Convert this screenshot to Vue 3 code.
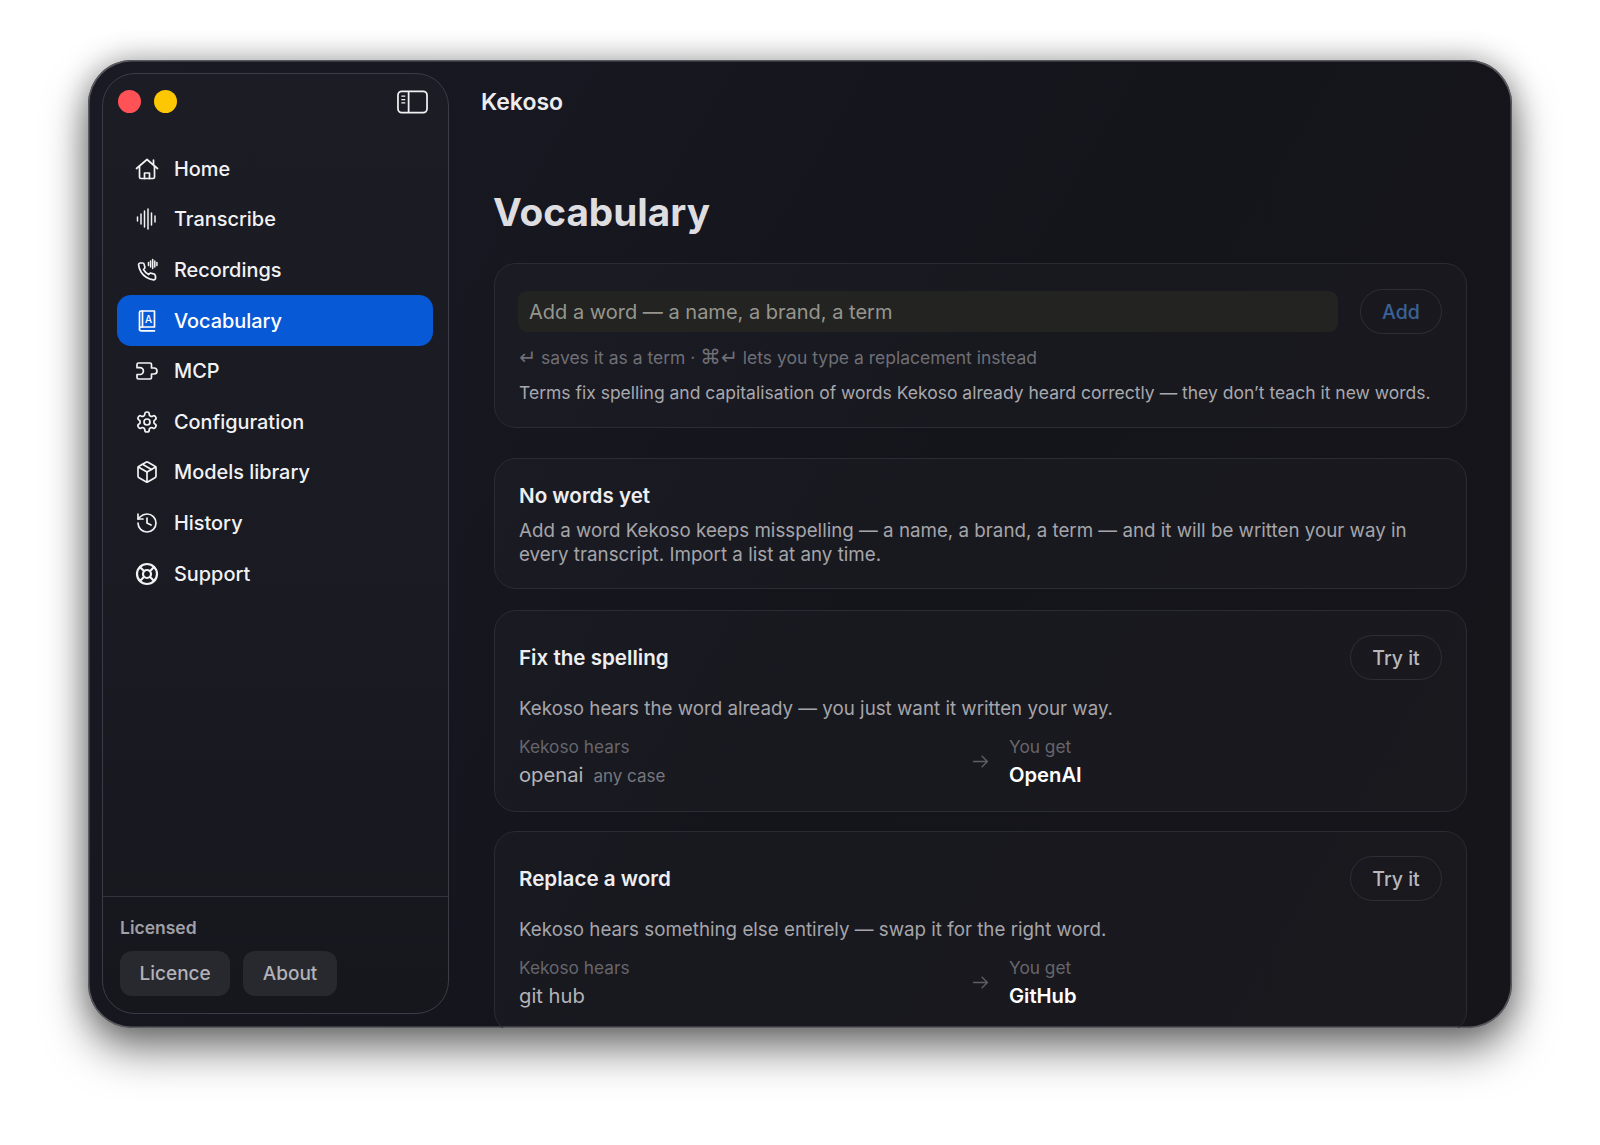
<script setup>
import { ref } from 'vue'

const word = ref('')

const bars = (list) => list.map(([x, h, y = 12]) => `M${x} ${y - h}v${h * 2}`)

const navItems = [
  { name: 'Home', paths: ['M1.5 11.5 12 2.5l10.5 9', 'M4.5 9.5v10.5a1.5 1.5 0 0 0 1.5 1.5h12a1.5 1.5 0 0 0 1.5-1.5V9.5', 'M9.5 21.5v-5.5h5v5.5', 'M18.5 3v4.5'] },
  { name: 'Transcribe', thin: bars([[2.5, 2], [6, 5], [9.5, 8], [13, 10], [16.5, 6], [20, 3]]), paths: [] },
  {
    name: 'Recordings',
    paths: [
      'M20.5 18v2.2a1.7 1.7 0 0 1-1.9 1.7 16.8 16.8 0 0 1-7.3-2.6 16.5 16.5 0 0 1-5.1-5.1 16.8 16.8 0 0 1-2.6-7.4A1.7 1.7 0 0 1 5.3 5h2.2a1.7 1.7 0 0 1 1.7 1.5c.1.8.3 1.6.6 2.3a1.7 1.7 0 0 1-.4 1.8l-.9.9a13.5 13.5 0 0 0 5.1 5.1l.9-.9a1.7 1.7 0 0 1 1.8-.4c.7.3 1.5.5 2.3.6a1.7 1.7 0 0 1 1.6 1.9z'
    ],
    thin: bars([[13.5, 1.5, 6], [15.6, 3, 6], [17.7, 4.5, 6], [19.8, 3, 6], [21.9, 1.5, 6]])
  },
  {
    name: 'Vocabulary',
    letter: 'A',
    paths: ['M4.5 19.5V3.5A1.5 1.5 0 0 1 6 2h13.5v16H6.3a1.8 1.8 0 0 0 0 3.8h13.2', 'M7.5 2v16'],
  },
  {
    name: 'MCP',
    paths: ['M2 5.5A1.5 1.5 0 0 1 3.5 4H15a1.5 1.5 0 0 1 1.5 1.5V9h2.5a3 3 0 0 1 0 6h-2.5v3.5A1.5 1.5 0 0 1 15 20H3.5A1.5 1.5 0 0 1 2 18.5V15.5h3a3.3 3.3 0 0 0 0-6.8H2z']
  },
  {
    name: 'Configuration',
    paths: [
      'M12.22 2h-.44a2 2 0 0 0-2 2v.18a2 2 0 0 1-1 1.73l-.43.25a2 2 0 0 1-2 0l-.15-.08a2 2 0 0 0-2.73.73l-.22.38a2 2 0 0 0 .73 2.73l.15.1a2 2 0 0 1 1 1.72v.51a2 2 0 0 1-1 1.74l-.15.09a2 2 0 0 0-.73 2.73l.22.38a2 2 0 0 0 2.73.73l.15-.08a2 2 0 0 1 2 0l.43.25a2 2 0 0 1 1 1.73V20a2 2 0 0 0 2 2h.44a2 2 0 0 0 2-2v-.18a2 2 0 0 1 1-1.73l.43-.25a2 2 0 0 1 2 0l.15.08a2 2 0 0 0 2.73-.73l.22-.39a2 2 0 0 0-.73-2.73l-.15-.08a2 2 0 0 1-1-1.74v-.5a2 2 0 0 1 1-1.74l.15-.09a2 2 0 0 0 .73-2.73l-.22-.38a2 2 0 0 0-2.73-.73l-.15.08a2 2 0 0 1-2 0l-.43-.25a2 2 0 0 1-1-1.73V4a2 2 0 0 0-2-2z',
      'M15 12a3 3 0 1 1-6 0 3 3 0 0 1 6 0z'
    ]
  },
  {
    name: 'Models library',
    paths: [
      'M21 8a2 2 0 0 0-1-1.73l-7-4a2 2 0 0 0-2 0l-7 4A2 2 0 0 0 3 8v8a2 2 0 0 0 1 1.73l7 4a2 2 0 0 0 2 0l7-4A2 2 0 0 0 21 16z',
      'm3.3 7 8.7 5 8.7-5', 'M12 22V12', 'm7.5 4.27 9 5.15'
    ]
  },
  { name: 'History', paths: ['M3 12a9 9 0 1 0 9-9 9.75 9.75 0 0 0-6.74 2.74L3 8', 'M3 3v5h5', 'M12 7v5l4 2'] },
  {
    name: 'Support',
    paths: [
      'M22 12a10 10 0 1 1-20 0 10 10 0 0 1 20 0z', 'M16 12a4 4 0 1 1-8 0 4 4 0 0 1 8 0z',
      'm4.93 4.93 4.24 4.24', 'm14.83 9.17 4.24-4.24', 'm14.83 14.83 4.24 4.24', 'm9.17 14.83-4.24 4.24'
    ],
    heavy: true
  }
]

const examples = [
  { title: 'Fix the spelling', text: 'Kekoso hears the word already — you just want it written your way.', from: 'openai', note: 'any case', to: 'OpenAI' },
  { title: 'Replace a word', text: 'Kekoso hears something else entirely — swap it for the right word.', from: 'git hub', note: '', to: 'GitHub' }
]
</script>

<template>
  <div class="page">
    <div class="window">
      <aside class="sidebar">
        <div class="sidebar-top">
          <div class="lights">
            <span class="light red"></span>
            <span class="light yellow"></span>
          </div>
          <svg class="toggle" viewBox="0 0 32 24" fill="none" stroke="currentColor" stroke-width="1.8">
            <rect x="1" y="1" width="30" height="22" rx="4" />
            <path d="M12 1v22" />
            <path d="M4.5 6h4M4.5 9.5h4M4.5 13h4" stroke-width="1.3" />
          </svg>
        </div>
        <nav class="nav">
          <a v-for="item in navItems" :key="item.name" :class="['nav-item', { active: item.name === 'Vocabulary' }]">
            <svg class="nav-icon" viewBox="0 0 24 24" fill="none" stroke="currentColor" :stroke-width="item.heavy ? 2.2 : 1.7" stroke-linecap="round" stroke-linejoin="round">
              <path v-for="d in item.paths" :key="d" :d="d" />
              <path v-for="d in item.thin" :key="d" :d="d" stroke-width="1.5" />
              <text v-if="item.letter" x="13.6" y="13.6" class="icon-letter">{{ item.letter }}</text>
            </svg>
            <span>{{ item.name }}</span>
          </a>
        </nav>
        <div class="sidebar-foot">
          <div class="licensed">Licensed</div>
          <div class="foot-buttons">
            <button class="foot-btn">Licence</button>
            <button class="foot-btn">About</button>
          </div>
        </div>
      </aside>

      <main class="main">
        <div class="app-title">Kekoso</div>
        <h1>Vocabulary</h1>

        <section class="card add-card">
          <div class="add-row">
            <input v-model="word" class="word-input" placeholder="Add a word — a name, a brand, a term">
            <button class="pill add-btn">Add</button>
          </div>
          <p class="hint"><span class="key">↵</span> saves it as a term · <span class="key">⌘↵</span> lets you type a replacement instead</p>
          <p class="terms">Terms fix spelling and capitalisation of words Kekoso already heard correctly — they don’t teach it new words.</p>
        </section>

        <section class="card empty-card">
          <h2>No words yet</h2>
          <p>Add a word Kekoso keeps misspelling — a name, a brand, a term — and it will be written your way in every transcript. Import a list at any time.</p>
        </section>

        <section v-for="ex in examples" :key="ex.title" class="card example">
          <div class="example-head">
            <h2>{{ ex.title }}</h2>
            <button class="pill try-btn">Try it</button>
          </div>
          <p class="example-text">{{ ex.text }}</p>
          <div class="mapping">
            <div class="side">
              <div class="side-label">Kekoso hears</div>
              <div class="side-value">{{ ex.from }}<span v-if="ex.note" class="note">{{ ex.note }}</span></div>
            </div>
            <svg class="arrow" viewBox="0 0 16 16" fill="none" stroke="currentColor" stroke-width="1.3" stroke-linecap="round" stroke-linejoin="round">
              <path d="M1.5 8h13M9.5 3l5 5-5 5" />
            </svg>
            <div class="side">
              <div class="side-label">You get</div>
              <div class="side-value result">{{ ex.to }}</div>
            </div>
          </div>
        </section>
      </main>
    </div>
  </div>
</template>

<style>
html, body {
  margin: 0;
  background: #fff;
}
</style>

<style scoped>
.page {
  height: 1145px;
  box-sizing: border-box;
  padding: 60px 88px 117px;
  background: #fff;
  font-family: Inter, "Liberation Sans", sans-serif;
  overflow: hidden;
}

.window {
  height: 100%;
  box-sizing: border-box;
  display: flex;
  padding: 13px 0 14px 14px;
  border-radius: 44px;
  background: linear-gradient(120deg, #1a1a25 0%, #14141b 55%, #15151a 100%);
  box-shadow: inset 0 0 0 1.5px #5a5a60, 0 22px 44px rgba(0, 0, 0, 0.5), 0 0 30px rgba(0, 0, 0, 0.3);
  overflow: hidden;
}

.sidebar {
  width: 347px;
  flex-shrink: 0;
  box-sizing: border-box;
  display: flex;
  flex-direction: column;
  border: 1px solid #3c3c46;
  border-radius: 33px;
  background: linear-gradient(180deg, #1c1c24 0%, #1a1a22 60%, #16161d 100%);
}

.sidebar-top {
  height: 55px;
  display: flex;
  align-items: center;
  justify-content: space-between;
  padding: 0 20px 0 15px;
}

.lights {
  display: flex;
  gap: 13px;
}

.light {
  width: 23px;
  height: 23px;
  border-radius: 50%;
}

.red { background: #ff5257; }
.yellow { background: #fdc703; }

.toggle {
  width: 31px;
  height: 24px;
  color: #f1f1f3;
}

.nav {
  display: flex;
  flex-direction: column;
  gap: 0;
  padding: 14.5px 15px 0 14px;
}

.nav-item {
  height: 50.6px;
  display: flex;
  align-items: center;
  gap: 15px;
  padding: 0 18px;
  border-radius: 14px;
  color: #f2f2f4;
  font-size: 19.9px;
  font-weight: 500;
}

.nav-item.active {
  background: #0759d6;
  color: #fff;
}

.nav-icon {
  width: 24px;
  height: 24px;
  flex-shrink: 0;
}

.icon-letter {
  font-size: 10px;
  font-family: Inter, sans-serif;
  font-weight: 500;
  text-anchor: middle;
  fill: currentColor;
  stroke: none;
}

.sidebar-foot {
  margin-top: auto;
  padding: 20px 17px 17px;
  border-top: 1px solid #33333c;
}

.licensed {
  font-size: 17.5px;
  font-weight: 600;
  color: #a0a0a8;
  margin-bottom: 13px;
}

.foot-buttons {
  display: flex;
  gap: 13px;
}

.foot-btn {
  height: 45px;
  padding: 0 19.5px;
  border: none;
  border-radius: 12px;
  background: #28282f;
  color: #b2b2b8;
  font: 500 19px Inter, sans-serif;
}

.main {
  flex: 1;
  min-width: 0;
  padding: 0 45px 0 32px;
}

.app-title {
  height: 57px;
  display: flex;
  align-items: center;
  font-size: 23px;
  font-weight: 600;
  color: #ececef;
}

h1 {
  margin: 57px 0 0 12px;
  font-size: 38.7px;
  line-height: 50px;
  font-weight: 700;
  color: #dedee1;
}

.card {
  margin-left: 13px;
  box-sizing: border-box;
  border: 1px solid #2b2b34;
  border-radius: 22px;
  background: rgba(255, 255, 255, 0.018);
}

.add-card {
  height: 165px;
  margin-top: 26px;
  padding: 25px 24px 0;
}

.add-row {
  display: flex;
  align-items: center;
  justify-content: space-between;
}

.word-input {
  width: 820px;
  height: 41px;
  margin-left: -1px;
  box-sizing: border-box;
  padding: 0 11px;
  border: none;
  outline: none;
  border-radius: 9px;
  background: #232321;
  color: #ddd;
  font: 400 20px Inter, sans-serif;
}

.word-input::placeholder {
  color: #96968f;
  opacity: 1;
}

.pill {
  height: 45px;
  padding: 0;
  border-radius: 23px;
  border: 1px solid #2e2e36;
  background: transparent;
  font: 500 19.5px Inter, sans-serif;
}

.add-btn {
  width: 82px;
  color: #3a6297;
}

.try-btn {
  width: 92px;
  color: #b8b8bd;
}

.hint {
  margin: 13px 0 0;
  font-size: 17.5px;
  line-height: 22px;
  color: #6f6f76;
}

.key {
  font-family: "DejaVu Sans", sans-serif;
  font-size: 20.5px;
  line-height: 1;
}

.terms {
  margin: 13px 0 0;
  font-size: 17.5px;
  line-height: 22px;
  color: #a8a8ad;
}

.empty-card {
  height: 131px;
  margin-top: 30px;
  padding: 24px 24px 0;
}

h2 {
  margin: 0;
  font-size: 20.6px;
  line-height: 26px;
  font-weight: 600;
  color: #eeeef0;
}

.empty-card p {
  margin: 10px 0 0;
  font-size: 18.75px;
  line-height: 23.5px;
  color: #a5a5aa;
}

.example {
  height: 202px;
  margin-top: 21px;
  padding: 24px 24px 0;
}

.example + .example {
  margin-top: 19px;
}

.example-head {
  display: flex;
  align-items: center;
  justify-content: space-between;
}

.example-text {
  margin: 17px 0 0;
  font-size: 18.75px;
  line-height: 24px;
  color: #a5a5aa;
}

.mapping {
  display: grid;
  grid-template-columns: 1fr 17px 1fr;
  column-gap: 20px;
  align-items: center;
  margin-top: 15px;
}

.side-label {
  font-size: 17.3px;
  line-height: 22px;
  color: #66666c;
}

.side-value {
  margin-top: 3.5px;
  font-size: 20.2px;
  line-height: 26px;
  height: 26px;
  color: #b4b4b8;
}

.note {
  margin-left: 10px;
  font-size: 17px;
  line-height: 1;
  color: #77777d;
}

.result {
  color: #fff;
  font-weight: 600;
}

.arrow {
  width: 17px;
  height: 17px;
  color: #5e5e64;
}
</style>
